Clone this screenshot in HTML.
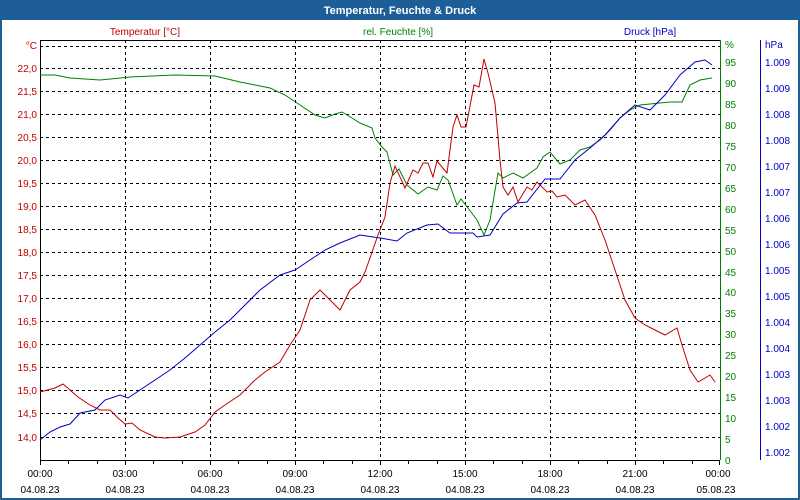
<!DOCTYPE html>
<html><head><meta charset="utf-8"><style>
html,body{margin:0;padding:0;background:#fff;}
svg{display:block;font-family:Tahoma,"Liberation Sans","DejaVu Sans",sans-serif;}
</style></head><body>
<svg width="800" height="500" xmlns="http://www.w3.org/2000/svg">
<rect x="0" y="0" width="800" height="500" fill="#1d5e98"/>
<rect x="2" y="20" width="796" height="478" fill="#fff"/>
<text x="400" y="14" fill="#fff" font-size="11" font-weight="bold" text-anchor="middle">Temperatur, Feuchte &amp; Druck</text>
<text x="145" y="35" fill="#c00000" font-size="10" text-anchor="middle">Temperatur [°C]</text>
<text x="398" y="35" fill="#008000" font-size="10" text-anchor="middle">rel. Feuchte [%]</text>
<text x="650" y="35" fill="#0000c0" font-size="10" text-anchor="middle">Druck [hPa]</text>
<g stroke="#000" stroke-width="1" stroke-dasharray="3,3" fill="none">
<path d="M40,46.5H720M40,68.5H720M40,91.5H720M40,114.5H720M40,137.5H720M40,160.5H720M40,183.5H720M40,206.5H720M40,229.5H720M40,252.5H720M40,275.5H720M40,298.5H720M40,321.5H720M40,344.5H720M40,367.5H720M40,390.5H720M40,413.5H720M40,437.5H720"/>
<path d="M125.5,40V460M210.5,40V460M295.5,40V460M380.5,40V460M465.5,40V460M550.5,40V460M635.5,40V460M720.5,40V460"/>
</g>
<path d="M40.5,40V460.5H720" stroke="#000" fill="none"/>
<path d="M40.5,40.5H720" stroke="#000" fill="none"/>
<g stroke="#000"><path d="M40.5,460V465M68.5,460V464M97.5,460V464M125.5,460V465M153.5,460V464M182.5,460V464M210.5,460V465M238.5,460V464M267.5,460V464M295.5,460V465M323.5,460V464M352.5,460V464M380.5,460V465M408.5,460V464M437.5,460V464M465.5,460V465M493.5,460V464M522.5,460V464M550.5,460V465M578.5,460V464M607.5,460V464M635.5,460V465M663.5,460V464M692.5,460V464M719.5,460V465"/></g>
<g fill="#c00000" font-size="10" text-anchor="end">
<text x="37" y="49">°C</text>
<text x="37" y="72">22,0</text><text x="37" y="95">21,5</text><text x="37" y="118">21,0</text><text x="37" y="141">20,5</text><text x="37" y="164">20,0</text><text x="37" y="187">19,5</text><text x="37" y="210">19,0</text><text x="37" y="233">18,5</text><text x="37" y="256">18,0</text><text x="37" y="279">17,5</text><text x="37" y="302">17,0</text><text x="37" y="325">16,5</text><text x="37" y="348">16,0</text><text x="37" y="371">15,5</text><text x="37" y="394">15,0</text><text x="37" y="417">14,5</text><text x="37" y="441">14,0</text>
</g>
<path d="M720.5,40V460" stroke="#008000" fill="none"/>
<g fill="#008000" font-size="10">
<text x="725" y="48">%</text>
<text x="725" y="66">95</text><text x="725" y="87">90</text><text x="725" y="108">85</text><text x="725" y="129">80</text><text x="725" y="150">75</text><text x="725" y="171">70</text><text x="725" y="192">65</text><text x="725" y="213">60</text><text x="725" y="234">55</text><text x="725" y="255">50</text><text x="725" y="276">45</text><text x="725" y="296">40</text><text x="725" y="317">35</text><text x="725" y="338">30</text><text x="725" y="359">25</text><text x="725" y="380">20</text><text x="725" y="401">15</text><text x="725" y="422">10</text><text x="725" y="443">5</text><text x="725" y="464">0</text>
</g>
<path d="M760.5,40V460" stroke="#0000c0" fill="none"/>
<g fill="#0000c0" font-size="10">
<text x="765" y="48">hPa</text>
<text x="765" y="66">1.009</text><text x="765" y="92">1.009</text><text x="765" y="118">1.008</text><text x="765" y="144">1.008</text><text x="765" y="170">1.007</text><text x="765" y="196">1.007</text><text x="765" y="222">1.006</text><text x="765" y="248">1.006</text><text x="765" y="274">1.005</text><text x="765" y="300">1.005</text><text x="765" y="326">1.004</text><text x="765" y="352">1.004</text><text x="765" y="378">1.003</text><text x="765" y="404">1.003</text><text x="765" y="430">1.002</text><text x="765" y="456">1.002</text>
</g>
<g fill="#000" font-size="10" text-anchor="middle">
<text x="40" y="477">00:00</text><text x="125" y="477">03:00</text><text x="210" y="477">06:00</text><text x="295" y="477">09:00</text><text x="380" y="477">12:00</text><text x="465" y="477">15:00</text><text x="550" y="477">18:00</text><text x="635" y="477">21:00</text><text x="718" y="477">00:00</text>
<text x="40" y="493">04.08.23</text><text x="125" y="493">04.08.23</text><text x="210" y="493">04.08.23</text><text x="295" y="493">04.08.23</text><text x="380" y="493">04.08.23</text><text x="465" y="493">04.08.23</text><text x="550" y="493">04.08.23</text><text x="635" y="493">04.08.23</text><text x="716" y="493">05.08.23</text>
</g>
<g fill="none" stroke-width="1">
<polyline stroke="#008000" points="40,75 55,75 70,78 100,80 130,77 175,75 215,76 240,82 270,88 285,95 300,105 315,115 325,118 335,114 342,112 352,118 360,123 372,128 375,138 382,147 387,152 393,175 399,169 407,185 418,194 428,187 437,190 443,176 448,180 457,205 461,199 468,208 477,220 484,235 490,220 498,173 503,178 513,173 523,178 537,168 543,157 550,152 560,164 570,160 580,150 590,147 600,140 610,130 620,118 630,110 640,105 650,104 670,102 682,102 690,85 700,80 712,78"/>
<polyline stroke="#0000c0" points="40,440 50,432 60,427 70,424 80,413 95,410 105,400 120,395 128,398 140,390 155,380 170,370 185,358 200,345 215,332 230,320 245,305 260,290 280,275 295,270 310,260 325,250 340,243 360,235 380,238 397,241 407,233 427,225 438,224 450,233 473,233 477,237 490,235 503,214 517,203 527,202 545,179 560,179 575,160 590,148 605,135 620,118 635,105 650,110 665,95 680,75 695,62 705,60 712,65"/>
<polyline stroke="#c00000" points="40,392 55,388 63,384 70,390 78,397 90,405 100,410 110,410 118,418 125,424 132,423 140,430 155,437 165,438 180,437 195,432 205,425 215,412 225,405 240,395 255,380 265,372 280,362 290,345 300,330 310,300 320,290 330,300 340,310 350,290 360,282 365,272 370,258 378,235 385,217 390,183 395,166 405,188 413,170 418,173 423,163 428,163 433,177 437,161 447,173 453,127 457,115 461,127 466,127 474,85 479,87 484,59 488,73 495,103 500,160 503,187 508,195 513,187 518,202 527,187 532,190 537,182 547,192 552,191 557,197 565,195 575,205 585,200 595,215 605,240 615,270 625,300 635,318 645,325 655,330 665,335 677,328 682,345 690,370 698,382 705,378 710,375 715,382"/>
</g>
</svg>
</body></html>
